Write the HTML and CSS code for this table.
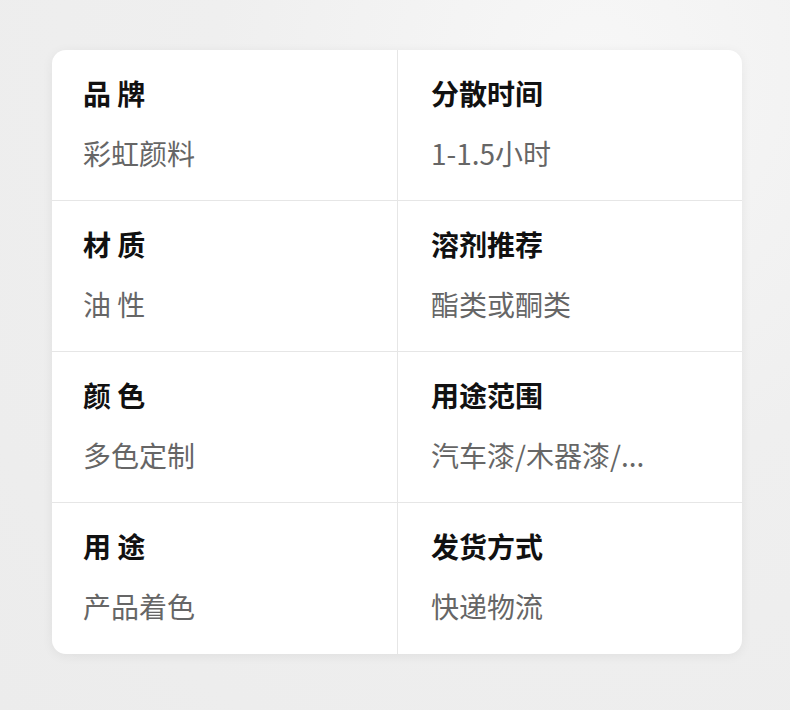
FILE: index.html
```html
<!DOCTYPE html>
<html lang="zh-CN">
<head>
<meta charset="utf-8">
<title>参数</title>
<link rel="stylesheet" href="styles.css">
</head>
<body>
<div class="page">
  <div class="card">
    <div class="cell"><div class="label">品 牌</div><div class="value">彩虹颜料</div></div>
    <div class="cell"><div class="label">分散时间</div><div class="value">1-1.5小时</div></div>
    <div class="cell"><div class="label">材 质</div><div class="value">油 性</div></div>
    <div class="cell"><div class="label">溶剂推荐</div><div class="value">酯类或酮类</div></div>
    <div class="cell"><div class="label">颜 色</div><div class="value">多色定制</div></div>
    <div class="cell"><div class="label">用途范围</div><div class="value">汽车漆/木器漆/...</div></div>
    <div class="cell"><div class="label">用 途</div><div class="value">产品着色</div></div>
    <div class="cell"><div class="label">发货方式</div><div class="value">快递物流</div></div>
  </div>
</div>
</body>
</html>
```

FILE: styles.css
```css
html, body {
  margin: 0;
  padding: 0;
}
body {
  width: 790px;
  height: 710px;
  overflow: hidden;
  font-family: "Noto Sans CJK SC", "Noto Sans", sans-serif;
  background: radial-gradient(ellipse at 75% 10%, #f7f7f7 0%, #efefef 45%, #ececec 100%);
}
.page {
  padding: 50px 48px 0 52px;
}
.card {
  width: 690px;
  background: #ffffff;
  border-radius: 14px;
  box-shadow: 0 2px 12px rgba(0, 0, 0, 0.06);
  display: grid;
  grid-template-columns: 345px 345px;
  grid-auto-rows: 151px;
  overflow: hidden;
}
.cell {
  box-sizing: border-box;
  padding: 27px 0 0 31px;
  border-bottom: 1px solid #e6e6e6;
}
.cell:nth-child(even) {
  border-left: 1px solid #e6e6e6;
  padding-left: 33px;
}
.cell:nth-last-child(-n+2) {
  border-bottom: none;
}
.label {
  font-size: 28px;
  line-height: 32px;
  font-weight: 700;
  color: #111111;
}
.value {
  margin-top: 28px;
  font-size: 28px;
  line-height: 32px;
  color: #666666;
}
```
